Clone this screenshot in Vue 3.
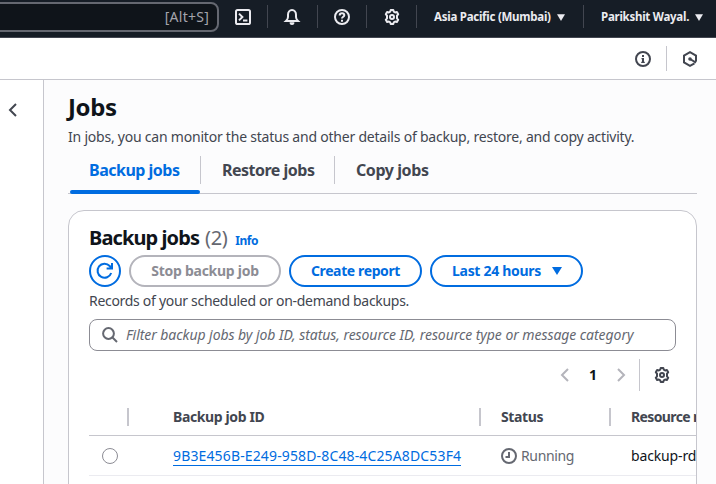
<script setup>
const tabs = [
  { label: 'Backup jobs', cls: 'active' },
  { label: 'Restore jobs', cls: 'middle' },
  { label: 'Copy jobs', cls: 'last' },
]
const gearPath = 'M6.7 1h2.6l.5 1.7 1.3.8 1.8-.4 1.3 2.2L13 6.6v2.8l1.2 1.3-1.3 2.2-1.8-.4-1.3.8-.5 1.7H6.7l-.5-1.7-1.3-.8-1.8.4-1.3-2.2L3 9.4V6.6L1.8 5.3l1.3-2.2 1.8.4 1.3-.8z'
</script>

<template>
  <div class="app">
    <header class="top">
      <div class="search"><span>[Alt+S]</span></div>
      <div class="cell cli"><svg viewBox="0 0 16 16"><rect x="1" y="1" width="14" height="14" rx="1.6" /><path d="M4 4.6 7.4 8 4 11.4M8 11.5h4.4" /></svg></div>
      <i class="sep" />
      <div class="cell bell"><svg viewBox="0 0 16 16"><path d="M2 12h12c-1.4-1.3-2-2.6-2-4V5.800C12 3 10.300 1 8 1S4 3 4 5.800V8c0 1.400-.6 2.700-2 4z" /><path d="M5.700 13.200h4.600A2.400 2.400 0 0 1 8 16a2.400 2.400 0 0 1-2.300-2.800z" class="solid" /></svg></div>
      <i class="sep" />
      <div class="cell help"><svg viewBox="0 0 16 16"><circle cx="8" cy="8" r="7" /><path d="M5.700 6.400C5.700 5 6.700 4.200 8 4.200s2.300.8 2.300 2c0 1.500-2.300 1.600-2.300 3.300M8 10.800v2" /></svg></div>
      <i class="sep" />
      <div class="cell"><svg class="gear" viewBox="0 0 16 16"><path :d="gearPath" /><circle cx="8" cy="8" r="2" /></svg></div>
      <i class="sep" />
      <div class="menu region"><span>Asia Pacific (Mumbai)</span><svg class="tri" viewBox="0 0 8 7"><path d="M0 .3h8L4 7z" /></svg></div>
      <i class="sep" />
      <div class="menu user"><span>Parikshit Wayal.</span><svg class="tri" viewBox="0 0 8 7"><path d="M0 .3h8L4 7z" /></svg></div>
    </header>

    <div class="toolbar">
      <svg class="ic" viewBox="0 0 16 16"><circle cx="8" cy="8" r="7" /><path d="M8 4v2M8 12V7" /><path d="M6.500 7.600H8M6.200 11.400h3.600" class="thin" /></svg>
      <i class="tsep" />
      <svg class="ic" viewBox="0 0 16 16"><path d="M14 10.500V4.600L8 1.200 2 4.600v6.800L8 14.800l4.500-2.500M8 8l6 3.600" /><circle cx="8" cy="8" r=".8" class="dot" /></svg>
    </div>

    <div class="body">
      <aside class="side"><svg viewBox="0 0 16 16"><path d="M11 2 5 8l6 6" /></svg></aside>
      <main class="content">
        <h1><span>Jobs</span></h1>
        <p class="desc">In jobs, you can monitor the status and other details of backup, restore, and copy activity.</p>
        <nav class="tabs">
          <div v-for="t in tabs" :key="t.label" class="tab" :class="t.cls"><span>{{ t.label }}</span></div>
        </nav>

        <section class="card">
          <div class="title"><h2>Backup jobs</h2><span class="count">(2)</span><a class="info">Info</a></div>
          <div class="actions">
            <button class="btn refresh"><svg viewBox="0 0 16 16"><path d="M14.200 10A7 7 0 1 1 12.700 3L15 5.500M15 0v5.500H9.600" /></svg></button>
            <button class="btn stop"><span>Stop backup job</span></button>
            <button class="btn create"><span>Create report</span></button>
            <button class="btn last24"><span>Last 24 hours</span><svg viewBox="0 0 10 8"><path d="M0 0h10L5 8z" /></svg></button>
          </div>
          <p class="records">Records of your scheduled or on-demand backups.</p>
          <div class="filter">
            <svg viewBox="0 0 16 16"><circle cx="6.500" cy="6.500" r="5.400" /><path d="m10.500 10.500 4.500 4.500" /></svg>
            <span>Filter backup jobs by job ID, status, resource ID, resource type or message category</span>
          </div>
          <div class="pager">
            <svg class="arrow" viewBox="0 0 16 16"><path d="M11 2 5 8l6 6" /></svg>
            <b>1</b>
            <svg class="arrow" viewBox="0 0 16 16"><path d="m5 2 6 6-6 6" /></svg>
            <i class="psep" />
            <svg class="gear" viewBox="0 0 16 16"><path :d="gearPath" /><circle cx="8" cy="8" r="2" /></svg>
          </div>
          <div class="table">
            <div class="row head">
              <div class="c0"></div>
              <div class="c1"><span>Backup job ID</span></div>
              <div class="c2"><span>Status</span></div>
              <div class="c3"><span>Resource name</span></div>
            </div>
            <div class="row data">
              <div class="c0"><i class="radio" /></div>
              <div class="c1"><a>9B3E456B-E249-958D-8C48-4C25A8DC53F4</a></div>
              <div class="c2"><svg viewBox="0 0 16 16"><circle cx="8" cy="8" r="7" /><path d="M8 4v5H4.500" /></svg><span>Running</span></div>
              <div class="c3"><span>backup-rds</span></div>
            </div>
          </div>
        </section>
      </main>
    </div>
  </div>
</template>

<style>
body { margin: 0; overflow: hidden; }
</style>

<style scoped>
* { box-sizing: border-box; }
.app { width: 716px; height: 484px; overflow: hidden; background: #fff; color: #424650; font: 14px/20px "Noto Sans", "Open Sans", sans-serif; display: flex; flex-direction: column; }
svg { display: block; width: 16px; height: 16px; flex: none; fill: none; stroke: currentColor; stroke-width: 2; overflow: visible; }
.gear { stroke-linejoin: round; }
span, a, p, h1, h2 { white-space: nowrap; }
.top { height: 38px; flex: none; background: #161d26; border-bottom: 1px solid #424650; display: flex; align-items: flex-start; color: #ebebf0; }
.search { height: 30px; margin: 2px 0 0 -10px; width: 229px; border: 2px solid #656871; border-radius: 8px; background: #0f141a; color: #a4a4ad; display: flex; justify-content: flex-end; padding: 2px 8px 0 0; line-height: 22px; letter-spacing: .25px; }
.cell { width: 49px; height: 34px; display: flex; align-items: center; justify-content: center; }
.cell.cli { width: 48px; }
.cell.bell { padding-right: 1px; }
.cell.help { width: 48px; }
.solid { fill: currentColor; stroke: none; }
.sep { width: 1px; height: 23px; margin-top: 5px; background: #424650; flex: none; }
.menu { height: 34px; display: flex; align-items: center; font-size: 11.5px; font-weight: 700; letter-spacing: -.26px; }
.region { width: 166px; padding-left: 17px; gap: 6.500px; }
.user { padding-left: 17px; gap: 5.500px; }
.tri { width: 8px; height: 7px; fill: currentColor; stroke: none; }
.toolbar { height: 42px; flex: none; border-bottom: 1px solid #c6c6cd; display: flex; align-items: center; justify-content: flex-end; padding-right: 18px; color: #424650; }
.thin { stroke-width: 1.2; }
.dot { fill: currentColor; }
.tsep { width: 1px; height: 25px; background: #c6c6cd; margin: 0 15px; }
.body { flex: 1; display: flex; min-height: 0; }
.side { width: 44px; border-right: 1px solid #c6c6cd; padding: 22px 0 0 5px; }
.content { flex: 1; background: #fcfcfd; padding: 12px 19px 0 24px; min-width: 0; }
h1, h2, p { margin: 0; }
h1 { font-size: 24px; line-height: 30px; color: #0f141a; letter-spacing: -.4px; }
.desc { margin-top: 5px; letter-spacing: -.22px; }
.tabs { height: 47px; display: flex; border-bottom: 1px solid #c6c6cd; font-size: 16px; font-weight: 700; }
.tab { height: 47px; display: flex; padding-top: 13px; position: relative; }
.tab span { line-height: 21px; letter-spacing: -.5px; }
.active { width: 132px; padding-left: 21px; color: #006ce0; }
.active::before { content: ""; position: absolute; left: 2px; right: 0; bottom: 0; height: 4px; border-radius: 4px; background: #006ce0; }
.active::after, .middle::after { content: ""; position: absolute; right: -1px; top: 9px; height: 28px; width: 1px; background: #c6c6cd; }
.middle { width: 134px; padding-left: 22px; }
.last { padding-left: 22px; }
.tab.last span { letter-spacing: -.42px; }
.card { margin-top: 16px; height: 300px; border: 1px solid #c6c6cd; border-radius: 16px; background: #fff; padding: 14px 0 0 20px; overflow: hidden; }
.title { height: 26px; display: flex; align-items: baseline; }
h2 { font-size: 20px; line-height: 25px; color: #0f141a; letter-spacing: -.9px; }
.count { font-size: 20px; line-height: 25px; color: #656871; margin-left: 6px; letter-spacing: -.4px; }
.info { font-size: 12px; font-weight: 700; color: #006ce0; margin-left: 8px; letter-spacing: -.5px; }
.actions { display: flex; gap: 8px; margin-top: 4px; }
.btn { height: 32px; border: 2px solid #006ce0; border-radius: 20px; background: #fff; color: #006ce0; padding: 0; display: flex; align-items: center; justify-content: center; font: 700 14px/20px "Noto Sans", sans-serif; letter-spacing: -.26px; }
.refresh { width: 32px; }
.stop { width: 152px; border-color: #b4b4bb; color: #8c8c94; }
.create { width: 133px; letter-spacing: -.38px; }
.last24 { width: 153px; gap: 11px; letter-spacing: -.3px; padding-left: 1px; }
.last24 svg { width: 10px; height: 8px; fill: currentColor; stroke: none; }
.records { margin-top: 4px; letter-spacing: -.3px; }
.filter { margin-top: 8px; width: 587px; height: 32px; border: 1px solid #8c8c94; border-radius: 8px; display: flex; align-items: center; padding-left: 12px; gap: 8px; color: #656871; font-style: italic; letter-spacing: -.06px; }
.pager { height: 32px; width: 587px; margin-top: 8px; display: flex; align-items: center; justify-content: flex-end; padding-right: 6px; }
.arrow { color: #b4b4bb; }
.pager b { width: 40px; text-align: center; color: #0f141a; }
.psep { width: 1px; height: 32px; background: #c6c6cd; margin: 0 14px 0 10px; }
.row { display: flex; }
.row > div { display: flex; align-items: center; flex: none; position: relative; }
.head { height: 45px; border-bottom: 1px solid #c6c6cd; font-weight: 700; padding-top: 7px; letter-spacing: -.38px; }
.head .c0::after, .head .c1::after, .head .c2::after { content: ""; width: 2px; height: 18px; background: #c6c6cd; position: absolute; right: 0; top: 10px; }
.head .c3 { letter-spacing: -.62px; }
.data { height: 40px; border-bottom: 1px solid #ebebf0; }
.c0 { width: 40px; padding-left: 13px; }
.c1 { width: 352px; padding-left: 44px; }
.c2 { width: 130px; padding-left: 20px; gap: 4px; color: #656871; }
.data .c2 { letter-spacing: -.35px; }
.c3 { padding-left: 20px; color: #0f141a; }
.data .c3 { letter-spacing: -.15px; }
.head .c2, .head .c3 { color: #424650; }
.radio { width: 16px; height: 16px; border: 1px solid #8c8c94; border-radius: 50%; }
.c1 a { color: #006ce0; border-bottom: 1px solid #006ce0; line-height: 19px; letter-spacing: .14px; }
</style>
